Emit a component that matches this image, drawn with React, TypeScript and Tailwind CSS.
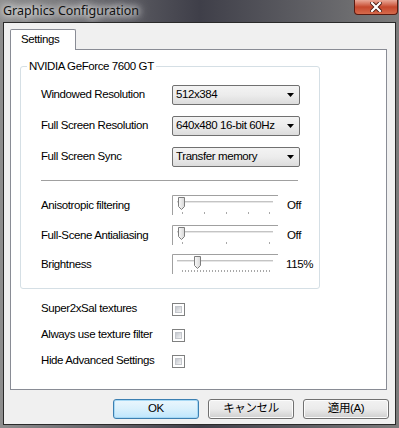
import React from 'react';

const uiFont = "font-['Liberation_Sans','Noto_Sans_CJK_JP',sans-serif] text-[11.5px] tracking-[-0.4px] text-black";

const Combo = ({ value }: { value: string }) => (
  <div className="flex h-[20px] w-[128px] items-center justify-between rounded-[2px] border border-[#707070] bg-gradient-to-b from-[#f3f3f3] via-[#ececec] to-[#dcdcdc] pl-[3px] pr-[4px]">
    <span className="leading-none">{value}</span>
    <svg width="8" height="4" viewBox="0 0 8 4">
      <path d="M0 0 H7 L3.5 4 Z" fill="#000" />
    </svg>
  </div>
);

const Slider = ({ thumb, ticks, tickY, trackY }: { thumb: number; ticks: number[]; tickY: number; trackY: number }) => (
  <svg width="106" height="21" viewBox="0 0 106 21" className="block">
    <defs>
      <linearGradient id="thumbGrad" x1="0" y1="0" x2="1" y2="0">
        <stop offset="0" stopColor="#fbfbfb" />
        <stop offset="1" stopColor="#d6d6d6" />
      </linearGradient>
    </defs>
    <path d="M0.5 20 V0.5 H106" stroke="#a0a0a0" fill="none" />
    <line x1="5" y1={trackY + 0.5} x2="101" y2={trackY + 0.5} stroke="#c4c4c4" />
    <line x1="5" y1={trackY + 1.5} x2="101" y2={trackY + 1.5} stroke="#e6e6e6" />
    {ticks.map((t) => (
      <line key={t} x1={t + 0.5} y1={tickY} x2={t + 0.5} y2={tickY + 2} stroke="#a8a8a8" />
    ))}
    <path
      d={`M${thumb + 0.5} 2.5 H${thumb + 6.5} V11.5 L${thumb + 3.5} 14.5 L${thumb + 0.5} 11.5 Z`}
      fill="url(#thumbGrad)"
      stroke="#7d7d7d"
    />
  </svg>
);

const Checkbox = () => (
  <div className="h-[13px] w-[13px] border border-[#7f8080] bg-white p-[2px]">
    <div className="h-full w-full border border-[#c4c7cc] bg-gradient-to-br from-[#c3c7ce] to-[#f4f4f4]" />
  </div>
);

const Button = ({ label, primary }: { label: string; primary?: boolean }) => (
  <div
    className={
      primary
        ? 'flex h-[20px] w-[86px] items-center justify-center rounded-[3px] border border-[#3c7fb1] bg-gradient-to-b from-[#eaf6fd] via-[#d9f0fc] to-[#bee6fd] shadow-[inset_0_0_0_1px_#a7d9f5]'
        : 'flex h-[20px] w-[86px] items-center justify-center rounded-[3px] border border-[#707070] bg-gradient-to-b from-[#f2f2f2] via-[#ebebeb] to-[#cfcfcf] shadow-[inset_0_0_0_1px_#fcfcfc]'
    }
  >
    <span className="leading-none">{label}</span>
  </div>
);

export default function App() {
  const fine = Array.from({ length: 30 }, (_, i) => 10 + i * 3);

  return (
    <div className={`flex h-[428px] w-[399px] flex-col overflow-hidden bg-gradient-to-r from-[#8e8e8e] via-[#3f3f49] to-[#7c7c7c] ${uiFont}`}>
      {/* title bar */}
      <div className="flex h-[22px] shrink-0 items-start justify-between pl-[3px] pr-[1px]">
        <span className="mt-[2px] font-['Noto_Sans',sans-serif] text-[12.5px] tracking-normal text-[#111] [text-shadow:0_0_6px_#fff,0_0_10px_#fff,0_0_14px_#fff]">
          Graphics Configuration
        </span>
        <div className="flex h-[15px] w-[44px] items-center justify-center rounded-b-[4px] border border-t-0 border-[#5a1a10] bg-gradient-to-b from-[#e9a898] via-[#c5472c] to-[#d56a4c]">
          <svg width="12" height="10" viewBox="0 0 12 10">
            <path d="M2 1 L10 9 M10 1 L2 9" stroke="#4a1a12" strokeWidth="4" strokeLinecap="square" />
            <path d="M2 1 L10 9 M10 1 L2 9" stroke="#fff" strokeWidth="2.2" strokeLinecap="square" />
          </svg>
        </div>
      </div>

      {/* client area */}
      <div className="mx-[3px] mb-[3px] flex flex-1 flex-col border border-[#2a2a2a] bg-[#f0f0f0] pl-[6px] pt-[6px]">
        <div className="relative z-10 -mb-px flex h-[21px] w-[66px] items-center rounded-t-[2px] border border-b-0 border-[#898c95] bg-white pl-[10px]">
          Settings
        </div>

        <div className="flex h-[341px] w-[377px] flex-col border border-[#898c95] bg-white pl-[9px] pt-[9px]">
          <fieldset className="h-[230px] w-[300px] rounded-[3px] border border-[#d5dfe5] pl-[20px] pt-[12px]">
            <legend className="-ml-[14px] px-[2px] leading-[14px]">NVIDIA GeForce 7600 GT</legend>

            <div className="flex flex-col gap-[11px]">
              <div className="flex items-center">
                <span className="w-[131px]">Windowed Resolution</span>
                <Combo value="512x384" />
              </div>
              <div className="flex items-center">
                <span className="w-[131px]">Full Screen Resolution</span>
                <Combo value="640x480 16-bit 60Hz" />
              </div>
              <div className="flex items-center">
                <span className="w-[131px]">Full Screen Sync</span>
                <Combo value="Transfer memory" />
              </div>
            </div>

            <div className="mt-[13px] h-[2px] w-[257px] border-t border-b border-t-[#a0a0a0] border-b-white" />

            <div className="mt-[13px] flex flex-col">
              <div className="flex h-[21px] items-center">
                <span className="w-[131px]">Anisotropic filtering</span>
                <Slider thumb={6} ticks={[10, 32, 54, 76, 97]} tickY={17} trackY={6} />
                <span className="ml-[9px]">Off</span>
              </div>
              <div className="mt-[9px] flex h-[21px] items-center">
                <span className="w-[131px]">Full-Scene Antialiasing</span>
                <Slider thumb={6} ticks={[10, 54, 97]} tickY={17} trackY={6} />
                <span className="ml-[9px]">Off</span>
              </div>
              <div className="mt-[8px] flex h-[21px] items-center">
                <span className="w-[131px]">Brightness</span>
                <Slider thumb={22} ticks={fine} tickY={16} trackY={6} />
                <span className="ml-[8px]">115%</span>
              </div>
            </div>
          </fieldset>

          <div className="mt-[12px] flex flex-col gap-[10px] pl-[21px]">
            <div className="flex h-[16px] items-center">
              <span className="w-[131px]">Super2xSal textures</span>
              <Checkbox />
            </div>
            <div className="flex h-[16px] items-center">
              <span className="w-[131px]">Always use texture filter</span>
              <Checkbox />
            </div>
            <div className="flex h-[16px] items-center">
              <span className="w-[131px]">Hide Advanced Settings</span>
              <Checkbox />
            </div>
          </div>
        </div>

        <div className="mt-[9px] flex justify-end gap-[9px] pr-[6px]">
          <Button label="OK" primary />
          <Button label="キャンセル" />
          <Button label="適用(A)" />
        </div>
      </div>
    </div>
  );
}
